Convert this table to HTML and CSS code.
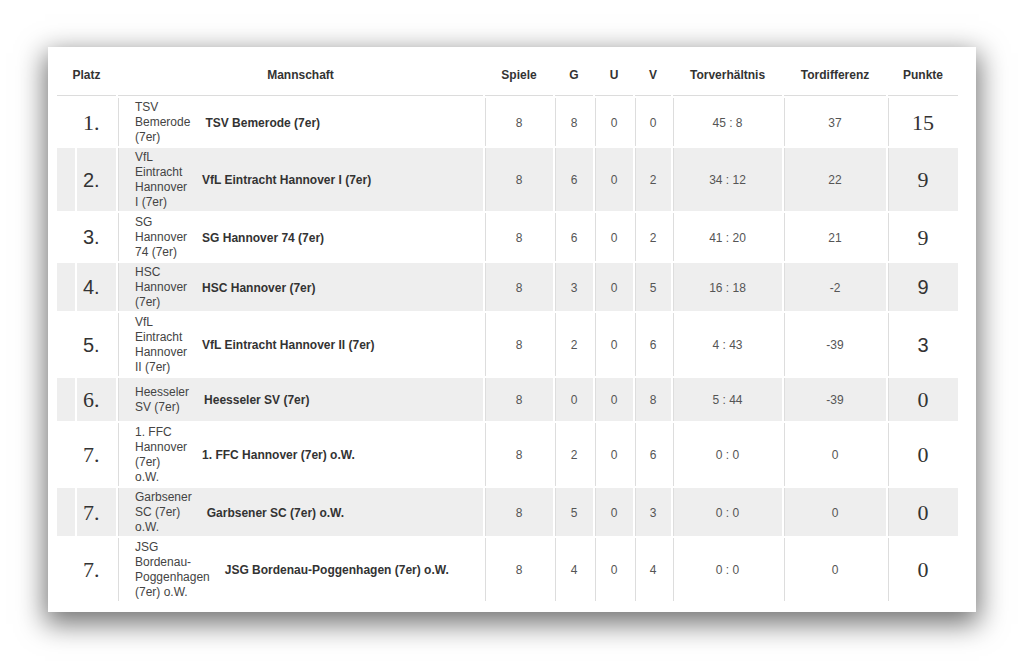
FILE: index.html
```html
<!DOCTYPE html>
<html lang="de">
<head>
<meta charset="utf-8">
<title>Tabelle</title>
<link rel="stylesheet" href="styles.css">
</head>
<body>
<div class="card">
  <table class="standings">
    <colgroup>
      <col class="c-pad"><col class="c-rank"><col class="c-team"><col class="c-games">
      <col class="c-small"><col class="c-small"><col class="c-v"><col class="c-goals">
      <col class="c-diff"><col class="c-pts">
    </colgroup>
    <thead>
      <tr>
        <th colspan="2">Platz</th>
        <th>Mannschaft</th>
        <th>Spiele</th>
        <th>G</th>
        <th>U</th>
        <th>V</th>
        <th>Torverhältnis</th>
        <th>Tordifferenz</th>
        <th>Punkte</th>
      </tr>
    </thead>
    <tbody>
      <tr>
        <td></td><td class="rank serif">1.</td>
        <td class="team"><div class="team-in"><span class="logo">TSV Bemerode (7er)</span><span class="name">TSV Bemerode (7er)</span></div></td>
        <td class="num">8</td><td class="num">8</td><td class="num">0</td><td class="num">0</td>
        <td class="num">45 : 8</td><td class="num">37</td><td class="pts serif">15</td>
      </tr>
      <tr class="alt">
        <td></td><td class="rank sans">2.</td>
        <td class="team"><div class="team-in"><span class="logo">VfL Eintracht Hannover I (7er)</span><span class="name">VfL Eintracht Hannover I (7er)</span></div></td>
        <td class="num">8</td><td class="num">6</td><td class="num">0</td><td class="num">2</td>
        <td class="num">34 : 12</td><td class="num">22</td><td class="pts serif">9</td>
      </tr>
      <tr>
        <td></td><td class="rank sans">3.</td>
        <td class="team"><div class="team-in"><span class="logo">SG Hannover 74 (7er)</span><span class="name">SG Hannover 74 (7er)</span></div></td>
        <td class="num">8</td><td class="num">6</td><td class="num">0</td><td class="num">2</td>
        <td class="num">41 : 20</td><td class="num">21</td><td class="pts serif">9</td>
      </tr>
      <tr class="alt">
        <td></td><td class="rank sans">4.</td>
        <td class="team"><div class="team-in"><span class="logo">HSC Hannover (7er)</span><span class="name">HSC Hannover (7er)</span></div></td>
        <td class="num">8</td><td class="num">3</td><td class="num">0</td><td class="num">5</td>
        <td class="num">16 : 18</td><td class="num">-2</td><td class="pts sans">9</td>
      </tr>
      <tr>
        <td></td><td class="rank sans">5.</td>
        <td class="team"><div class="team-in"><span class="logo">VfL Eintracht Hannover II (7er)</span><span class="name">VfL Eintracht Hannover II (7er)</span></div></td>
        <td class="num">8</td><td class="num">2</td><td class="num">0</td><td class="num">6</td>
        <td class="num">4 : 43</td><td class="num">-39</td><td class="pts sans">3</td>
      </tr>
      <tr class="alt">
        <td></td><td class="rank serif">6.</td>
        <td class="team"><div class="team-in"><span class="logo">Heesseler SV (7er)</span><span class="name">Heesseler SV (7er)</span></div></td>
        <td class="num">8</td><td class="num">0</td><td class="num">0</td><td class="num">8</td>
        <td class="num">5 : 44</td><td class="num">-39</td><td class="pts serif">0</td>
      </tr>
      <tr>
        <td></td><td class="rank serif">7.</td>
        <td class="team"><div class="team-in"><span class="logo">1. FFC Hannover (7er) o.W.</span><span class="name">1. FFC Hannover (7er) o.W.</span></div></td>
        <td class="num">8</td><td class="num">2</td><td class="num">0</td><td class="num">6</td>
        <td class="num">0 : 0</td><td class="num">0</td><td class="pts serif">0</td>
      </tr>
      <tr class="alt">
        <td></td><td class="rank serif">7.</td>
        <td class="team"><div class="team-in"><span class="logo">Garbsener SC (7er) o.W.</span><span class="name">Garbsener SC (7er) o.W.</span></div></td>
        <td class="num">8</td><td class="num">5</td><td class="num">0</td><td class="num">3</td>
        <td class="num">0 : 0</td><td class="num">0</td><td class="pts serif">0</td>
      </tr>
      <tr>
        <td></td><td class="rank serif">7.</td>
        <td class="team"><div class="team-in"><span class="logo">JSG Bordenau-Poggenhagen (7er) o.W.</span><span class="name">JSG Bordenau-Poggenhagen (7er) o.W.</span></div></td>
        <td class="num">8</td><td class="num">4</td><td class="num">0</td><td class="num">4</td>
        <td class="num">0 : 0</td><td class="num">0</td><td class="pts serif">0</td>
      </tr>
    </tbody>
  </table>
</div>
</body>
</html>
```

FILE: styles.css
```css
html, body {
  margin: 0;
  padding: 0;
  background: #ffffff;
}

body {
  min-height: 661px;
  box-sizing: border-box;
  padding: 47px 0 40px 48px;
  font-family: "Liberation Sans", Arial, sans-serif;
  font-size: 12px;
  color: #444;
}

.card {
  width: 905px;
  padding: 4px 16px 9px 7px;
  background: #fff;
  box-shadow: 0 9px 26px 3px rgba(0, 0, 0, 0.55);
}

.standings {
  width: 905px;
  table-layout: fixed;
  border-collapse: separate;
  border-spacing: 2px;
}

.c-pad { width: 18px; }
.c-rank { width: 39px; }
.c-team { width: 365px; }
.c-games { width: 68px; }
.c-small { width: 38px; }
.c-v { width: 36px; }
.c-goals { width: 109px; }
.c-diff { width: 102px; }
.c-pts { width: 70px; }

.standings th {
  height: 43px;
  padding: 0;
  font-weight: bold;
  font-size: 12px;
  color: #333;
  text-align: center;
  vertical-align: middle;
  box-shadow: inset 0 -1px 0 #dcdcdc;
}

.standings td {
  padding: 2px 0 1px;
  vertical-align: middle;
  text-align: center;
}

.standings tr.alt td {
  background: #eeeeee;
}

.standings td:nth-child(n+3) {
  box-shadow: inset 1px 0 0 #dddddd;
}

.rank {
  text-align: left !important;
  padding-left: 6px !important;
  color: #333;
}

.serif {
  font-family: "Liberation Serif", "Times New Roman", serif;
  font-size: 22px;
}

.sans {
  font-family: "Liberation Sans", Arial, sans-serif;
  font-size: 20px;
}

.pts {
  color: #333;
}

.num {
  color: #555;
}

.team {
  text-align: left !important;
  padding-left: 17px !important;
}

.team-in {
  display: flex;
  align-items: center;
  gap: 15px;
}

.logo {
  width: min-content;
  min-height: 40px;
  display: flex;
  align-items: center;
  line-height: 15px;
  color: #444;
}

.name {
  font-weight: bold;
  color: #333;
}
```
